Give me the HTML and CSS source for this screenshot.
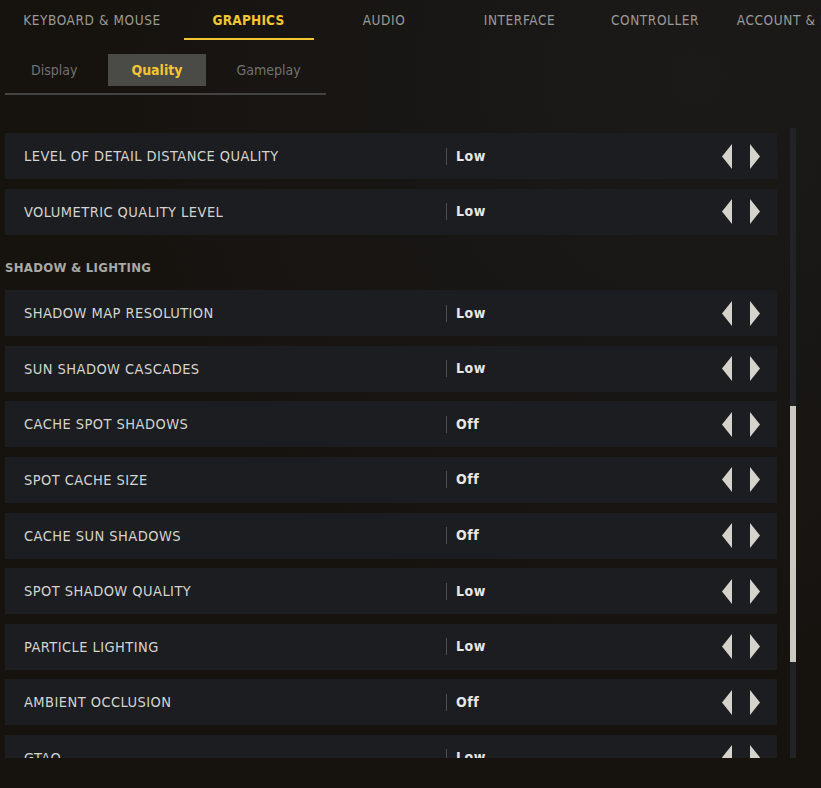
FILE: index.html
```html
<!DOCTYPE html>
<html>
  <head>
    <title>Graphics Settings</title>
    <link rel="stylesheet" href="styles.css">
  </head>
  <body>
    <nav class="top-tabs">
      <div class="tab wide">KEYBOARD &amp; MOUSE</div>
      <div class="tab active">GRAPHICS</div>
      <div class="tab">AUDIO</div>
      <div class="tab">INTERFACE</div>
      <div class="tab">CONTROLLER</div>
      <div class="tab wide">ACCOUNT &amp; NETWORK</div>
    </nav>

    <div class="sub-tabs">
      <div class="sub-tab">Display</div>
      <div class="sub-tab active">Quality</div>
      <div class="sub-tab">Gameplay</div>
    </div>

    <div class="panel">
      <div class="list">
        <div class="row">
          <span class="label">LEVEL OF DETAIL DISTANCE QUALITY</span>
          <span class="value">Low</span>
          <span class="arrows">
            <svg width="10" height="25" viewBox="0 0 10 25"><polygon points="10,0 0,12.5 10,25"/></svg>
            <svg width="10" height="25" viewBox="0 0 10 25"><polygon points="0,0 10,12.5 0,25"/></svg>
          </span>
        </div>
        <div class="row">
          <span class="label">VOLUMETRIC QUALITY LEVEL</span>
          <span class="value">Low</span>
          <span class="arrows">
            <svg width="10" height="25" viewBox="0 0 10 25"><polygon points="10,0 0,12.5 10,25"/></svg>
            <svg width="10" height="25" viewBox="0 0 10 25"><polygon points="0,0 10,12.5 0,25"/></svg>
          </span>
        </div>

        <div class="section">SHADOW &amp; LIGHTING</div>

        <div class="row">
          <span class="label">SHADOW MAP RESOLUTION</span>
          <span class="value">Low</span>
          <span class="arrows">
            <svg width="10" height="25" viewBox="0 0 10 25"><polygon points="10,0 0,12.5 10,25"/></svg>
            <svg width="10" height="25" viewBox="0 0 10 25"><polygon points="0,0 10,12.5 0,25"/></svg>
          </span>
        </div>
        <div class="row">
          <span class="label">SUN SHADOW CASCADES</span>
          <span class="value">Low</span>
          <span class="arrows">
            <svg width="10" height="25" viewBox="0 0 10 25"><polygon points="10,0 0,12.5 10,25"/></svg>
            <svg width="10" height="25" viewBox="0 0 10 25"><polygon points="0,0 10,12.5 0,25"/></svg>
          </span>
        </div>
        <div class="row">
          <span class="label">CACHE SPOT SHADOWS</span>
          <span class="value">Off</span>
          <span class="arrows">
            <svg width="10" height="25" viewBox="0 0 10 25"><polygon points="10,0 0,12.5 10,25"/></svg>
            <svg width="10" height="25" viewBox="0 0 10 25"><polygon points="0,0 10,12.5 0,25"/></svg>
          </span>
        </div>
        <div class="row">
          <span class="label">SPOT CACHE SIZE</span>
          <span class="value">Off</span>
          <span class="arrows">
            <svg width="10" height="25" viewBox="0 0 10 25"><polygon points="10,0 0,12.5 10,25"/></svg>
            <svg width="10" height="25" viewBox="0 0 10 25"><polygon points="0,0 10,12.5 0,25"/></svg>
          </span>
        </div>
        <div class="row">
          <span class="label">CACHE SUN SHADOWS</span>
          <span class="value">Off</span>
          <span class="arrows">
            <svg width="10" height="25" viewBox="0 0 10 25"><polygon points="10,0 0,12.5 10,25"/></svg>
            <svg width="10" height="25" viewBox="0 0 10 25"><polygon points="0,0 10,12.5 0,25"/></svg>
          </span>
        </div>
        <div class="row">
          <span class="label">SPOT SHADOW QUALITY</span>
          <span class="value">Low</span>
          <span class="arrows">
            <svg width="10" height="25" viewBox="0 0 10 25"><polygon points="10,0 0,12.5 10,25"/></svg>
            <svg width="10" height="25" viewBox="0 0 10 25"><polygon points="0,0 10,12.5 0,25"/></svg>
          </span>
        </div>
        <div class="row">
          <span class="label">PARTICLE LIGHTING</span>
          <span class="value">Low</span>
          <span class="arrows">
            <svg width="10" height="25" viewBox="0 0 10 25"><polygon points="10,0 0,12.5 10,25"/></svg>
            <svg width="10" height="25" viewBox="0 0 10 25"><polygon points="0,0 10,12.5 0,25"/></svg>
          </span>
        </div>
        <div class="row">
          <span class="label">AMBIENT OCCLUSION</span>
          <span class="value">Off</span>
          <span class="arrows">
            <svg width="10" height="25" viewBox="0 0 10 25"><polygon points="10,0 0,12.5 10,25"/></svg>
            <svg width="10" height="25" viewBox="0 0 10 25"><polygon points="0,0 10,12.5 0,25"/></svg>
          </span>
        </div>
        <div class="row">
          <span class="label">GTAO</span>
          <span class="value">Low</span>
          <span class="arrows">
            <svg width="10" height="25" viewBox="0 0 10 25"><polygon points="10,0 0,12.5 10,25"/></svg>
            <svg width="10" height="25" viewBox="0 0 10 25"><polygon points="0,0 10,12.5 0,25"/></svg>
          </span>
        </div>
      </div>

      <div class="scroll-track">
        <div class="scroll-thumb"></div>
      </div>
    </div>
  </body>
</html>
```

FILE: styles.css
```css
* {
  box-sizing: border-box;
  margin: 0;
  padding: 0;
}

body {
  width: 821px;
  height: 788px;
  overflow: hidden;
  font-family: "DejaVu Sans Condensed", "DejaVu Sans", sans-serif;
  font-stretch: condensed;
  background: #16130f;
  background-image: radial-gradient(ellipse at 85% 10%, #1b1a19 0%, #16130f 60%);
}

/* top navigation */
.top-tabs {
  display: flex;
  gap: 5.5px;
  padding-left: 6px;
  height: 40px;
  overflow: hidden;
  white-space: nowrap;
}

.tab {
  flex-shrink: 0;
  width: 130px;
  text-align: center;
  font-size: 13.5px;
  letter-spacing: 0.6px;
  line-height: 40px;
  color: #9a9a98;
  border-bottom: 2px solid transparent;
}

.tab.wide {
  width: 172px;
}

.tab.active {
  color: #f3c532;
  font-weight: bold;
  letter-spacing: 0.2px;
  border-bottom-color: #f3c532;
}

/* quality / display / gameplay */
.sub-tabs {
  display: flex;
  gap: 7px;
  width: 321px;
  margin-left: 5px;
  padding: 14px 0 7px 2.5px;
  border-bottom: 2px solid #434341;
}

.sub-tab {
  height: 32px;
  line-height: 32px;
  padding: 0 23.5px;
  font-size: 14px;
  color: #72726f;
}

.sub-tab.active {
  background: #4a4a46;
  color: #f3c532;
  font-weight: bold;
}

/* settings list */
.panel {
  display: flex;
  margin-top: 33px;
  height: 630px;
}

.list {
  width: 772px;
  margin-left: 5px;
  padding-top: 5px;
  overflow: hidden;
  display: flex;
  flex-direction: column;
  gap: 9.6px;
}

.row {
  flex-shrink: 0;
  display: flex;
  align-items: center;
  height: 46px;
  padding: 0 17px 0 19px;
  background: #1c1d20;
}

.label {
  width: 422px;
  font-size: 14.5px;
  letter-spacing: 0.45px;
  color: #d4d4d0;
}

.value {
  flex: 1;
  border-left: 1px solid #4e4e4c;
  padding-left: 9px;
  line-height: 17px;
  font-size: 14px;
  font-weight: bold;
  letter-spacing: 0.5px;
  color: #e8e8e4;
}

.arrows {
  display: flex;
  gap: 18px;
}

.arrows svg {
  fill: #d4d4cc;
}

.section {
  flex-shrink: 0;
  height: 36.4px;
  padding-top: 16px;
  line-height: 16px;
  font-size: 13px;
  font-weight: bold;
  letter-spacing: 0.3px;
  color: #a9a9a5;
}

.scroll-track {
  width: 6px;
  height: 630px;
  margin-left: 13px;
  background: #222326;
}

.scroll-thumb {
  height: 256px;
  margin-top: 278px;
  background: #c9c9c1;
}
```
